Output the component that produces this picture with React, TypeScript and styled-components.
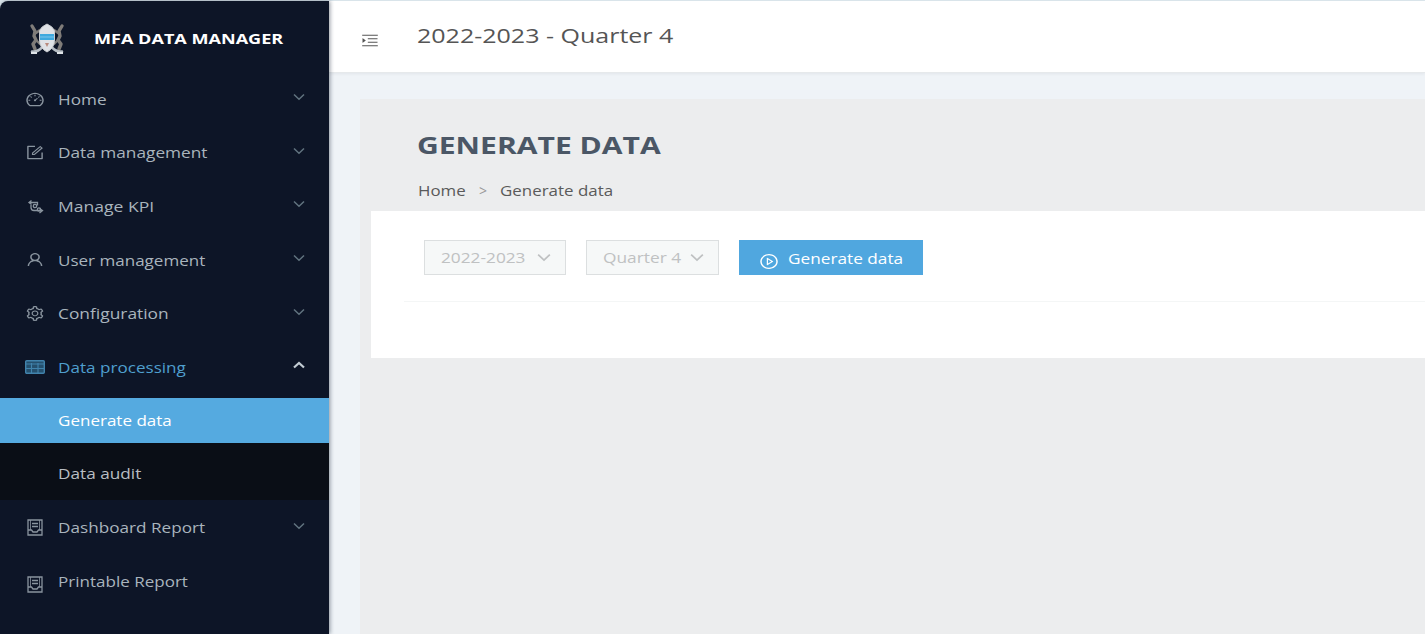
import React from "react";
import styled, { createGlobalStyle } from "styled-components";
import {
  AiOutlineDashboard,
  AiOutlineForm,
  AiOutlineUser,
  AiOutlineSetting,
  AiOutlineMenuUnfold,
  AiOutlinePlayCircle,
} from "react-icons/ai";

const GlobalStyle = createGlobalStyle`
  * { box-sizing: border-box; }
  body {
    margin: 0;
    overflow: hidden;
    font-family: "Open Sans", "Noto Sans", sans-serif;
  }
`;

const Page = styled.div`
  display: flex;
  height: 634px;
  padding-top: 1px;
  background: #dbe6ec;
`;

const Sidebar = styled.aside`
  flex: none;
  width: 329px;
  border-radius: 8px 0 0 0;
  background: #0d1527;
  box-shadow: 1px 0 4px rgba(10, 25, 45, 0.45);
  z-index: 1;
`;

const Brand = styled.div`
  display: flex;
  align-items: center;
  height: 71px;
  padding: 4px 0 0 28px;
`;

const BrandName = styled.div`
  margin-left: 28px;
  height: 20px;
  color: #fff;
  font: 700 14.5px/20px "Open Sans", sans-serif;
  white-space: nowrap;
`;

/* Text drawn on a wide face: glyphs keep their height and grow sideways. */
const Wide = styled.span<{ $x: number }>`
  display: inline-block;
  white-space: nowrap;
  transform: scaleX(${(p) => p.$x});
  transform-origin: 0 50%;
`;

const Menu = styled.nav`
  display: flex;
  flex-direction: column;
`;

const Item = styled.div<{ $active?: boolean }>`
  display: flex;
  flex: none;
  align-items: center;
  height: 53.6px;
  padding: 0 24px 0 25px;
  color: ${(p) => (p.$active ? "#4f9fce" : "#a9b4bd")};
  font-size: 15px;
`;

const ItemIcon = styled.span<{ $drop?: number }>`
  display: flex;
  width: 33px;
  flex: none;
  opacity: 0.8;
  padding-top: ${(p) => p.$drop ?? 0}px;
`;

const ItemLabel = styled.span`
  flex: 1;
`;

const Arrow = styled.span<{ $open?: boolean }>`
  display: flex;
  margin-top: -3px;
  color: ${(p) => (p.$open ? "#c3cdd4" : "#61737f")};
`;

const SubMenu = styled.div`
  flex: none;
  height: 102.4px;
  margin-top: 4.4px;
  background: #0a0e16;
`;

const SubItem = styled.div<{ $selected?: boolean }>`
  display: flex;
  align-items: center;
  height: ${(p) => (p.$selected ? 45 : 61)}px;
  padding-left: 58px;
  background: ${(p) => (p.$selected ? "#55aae0" : "transparent")};
  color: ${(p) => (p.$selected ? "#fff" : "#b9bec3")};
  font-size: 15px;
`;

const Main = styled.main`
  flex: 1;
  min-width: 0;
  display: flex;
  flex-direction: column;
  background: #eff3f7;
`;

const TopBar = styled.header`
  flex: none;
  display: flex;
  align-items: center;
  height: 72px;
  padding-left: 31px;
  background: #fff;
  border-bottom: 1px solid #e6e9eb;
  box-shadow: 0 1px 3px rgba(0, 21, 41, 0.06);
`;

const Toggle = styled.span`
  display: flex;
  width: 57px;
  padding-top: 8px;
  color: #555;
`;

const Period = styled.div`
  height: 30px;
  margin-bottom: 3px;
  line-height: 30px;
  font-size: 20.5px;
  color: #555;
`;

const Panel = styled.section`
  flex: 1;
  margin: 26px 0 0 31px;
  padding-left: 11px;
  background: #ecedee;
`;

const Heading = styled.div`
  height: 112px;
  padding: 31px 0 0 46px;
`;

const Title = styled.h1`
  margin: 0;
  height: 30px;
  color: #4b5766;
  font-size: 24px;
  line-height: 30px;
  font-weight: 700;
`;

const Crumbs = styled.div`
  display: flex;
  height: 20px;
  margin: 21px 0 0 1px;
  color: #5a5a5a;
  font-size: 14px;
  line-height: 20px;
`;

const Crumb = styled.span<{ $w: number; $faint?: boolean }>`
  width: ${(p) => p.$w}px;
  color: ${(p) => (p.$faint ? "#999" : "inherit")};
`;

const Card = styled.div`
  height: 147px;
  padding: 29px 0 0 33px;
  background: #fff;
`;

const Controls = styled.div`
  display: flex;
  height: 62px;
  padding-left: 20px;
  border-bottom: 1px solid #f4f6f6;
`;

const Select = styled.div<{ $w: number }>`
  display: flex;
  align-items: center;
  justify-content: space-between;
  width: ${(p) => p.$w}px;
  height: 35px;
  margin-right: 20px;
  padding: 0 14px 0 15.5px;
  border: 1px solid #dcdfe0;
  background: #f6f8f8;
  color: #bfc1c2;
  font-size: 14.5px;
`;

const GenerateButton = styled.button`
  display: flex;
  align-items: center;
  width: 184px;
  height: 35px;
  padding: 1px 0 0 20px;
  border: 0;
  background: #50a7df;
  color: #fff;
  font: 14.5px "Open Sans", sans-serif;
`;

const ButtonIcon = styled.span`
  display: flex;
  width: 29px;
  padding-top: 6px;
`;

const Glyph = styled.svg`
  display: block;
  flex: none;
  fill: none;
  stroke: currentColor;
`;

const Chevron = ({ w = 12, h = 8, up = false }: { w?: number; h?: number; up?: boolean }) => (
  <Glyph
    width={w}
    height={h}
    viewBox="0 0 12 8"
    strokeWidth={up ? 2.2 : 1.5}
    preserveAspectRatio="none"
  >
    <path d={up ? "M1 6.500 6 2l5 4.500" : "M1 1.500 6 6.300l5-4.800"} />
  </Glyph>
);

const CoatOfArms = () => (
  <Glyph width="38" height="32" viewBox="0 0 38 32">
    <g stroke="#7f7c79" strokeWidth="3.4" strokeLinecap="round" strokeLinejoin="round">
      <path d="M4 3 7 8 6 13 8 17 5 21 7 26" />
      <path d="M34 3 31 8 32 13 30 17 33 21 31 26" />
      <path d="M8 10 12 7M30 10 26 7M8 17 12 21M30 17 26 21" strokeWidth="2.4" />
    </g>
    <path d="M4 28.500q5 1 10-4h10q5 5 10 4" stroke="#b5bcc3" strokeWidth="2.600" strokeLinecap="round" />
    <path d="M3 30h6M29 30h6" stroke="#dfe4e8" strokeWidth="2" />
    <path d="M11.500 8q1-4 7.500-7 6.500 3 7.500 7v9q0 8-7.500 12-7.500-4-7.500-12z" fill="#dfe2e6" stroke="#c8ccd0" />
    <path d="M12 11h14v6H12z" fill="#3fa9de" stroke="none" />
    <path d="M12 14h14" stroke="#7cc6ec" />
    <path d="M17 20h4l-2 4z" fill="#b98a7d" stroke="none" />
  </Glyph>
);

const KpiIcon = () => (
  <Glyph width="20" height="16" viewBox="-2 0 20 16" strokeWidth="1.3">
    <path d="M2 3.5h8.5v3M4.500 1.500 2 3.500l2.500 2M4 6v2.500q0 3 3 3h8M12.500 9.500l3 2-3 2.500" />
    <circle cx="8" cy="7" r="1.700" />
    <circle cx="12" cy="10.500" r="1.700" />
  </Glyph>
);

const TableIcon = () => (
  <Glyph width="20" height="14" viewBox="0 0 20 14">
    <rect x="0.700" y="0.700" width="18.600" height="12.600" rx="1" fill="#2b5f80" strokeWidth="1.400" />
    <path d="M1 4h18M1 8.500h18M6.500 3v10M13 3v10" strokeWidth="1.100" />
  </Glyph>
);

const ReportIcon = () => (
  <Glyph width="18" height="17" viewBox="-2 0 18 17" strokeWidth="1.300">
    <path d="M1 1h14v15H1zM1 11h3.500l1.500 2h4l1.500-2H15M5 4.500h6M5 7.500h6" />
    <path d="M3.500 1v10M12.500 1v10" strokeWidth="0.800" />
  </Glyph>
);

type Entry = {
  label: string;
  x: number;
  icon: React.ReactNode;
  drop?: number;
  arrow?: boolean;
  open?: boolean;
};

const wideIcon = (Icon: React.ComponentType<any>) => (
  <Icon preserveAspectRatio="none" style={{ width: 20, height: 17 }} />
);

const before: Entry[] = [
  { label: "Home", x: 1.145, icon: wideIcon(AiOutlineDashboard), arrow: true, drop: 2 },
  { label: "Data management", x: 1.15, icon: wideIcon(AiOutlineForm), arrow: true },
  { label: "Manage KPI", x: 1.17, icon: <KpiIcon />, arrow: true, drop: 2 },
  { label: "User management", x: 1.135, icon: wideIcon(AiOutlineUser), arrow: true },
  { label: "Configuration", x: 1.157, icon: wideIcon(AiOutlineSetting), arrow: true },
  { label: "Data processing", x: 1.14, icon: <TableIcon />, arrow: true, open: true },
];

const after: Entry[] = [
  { label: "Dashboard Report", x: 1.143, icon: <ReportIcon />, arrow: true, drop: 1 },
  { label: "Printable Report", x: 1.135, icon: <ReportIcon />, drop: 7 },
];

const MenuItem = ({ e }: { e: Entry }) => (
  <Item $active={e.open}>
    <ItemIcon $drop={e.drop}>{e.icon}</ItemIcon>
    <ItemLabel>
      <Wide $x={e.x}>{e.label}</Wide>
    </ItemLabel>
    {e.arrow && (
      <Arrow $open={e.open}>
        <Chevron up={e.open} h={8} />
      </Arrow>
    )}
  </Item>
);

export default function App() {
  return (
    <>
      <GlobalStyle />
      <Page>
        <Sidebar>
          <Brand>
            <CoatOfArms />
            <BrandName>
              <Wide $x={1.245}>MFA DATA MANAGER</Wide>
            </BrandName>
          </Brand>
          <Menu>
            {before.map((e) => (
              <MenuItem key={e.label} e={e} />
            ))}
            <SubMenu>
              <SubItem $selected>
                <Wide $x={1.135}>Generate data</Wide>
              </SubItem>
              <SubItem>
                <Wide $x={1.147}>Data audit</Wide>
              </SubItem>
            </SubMenu>
            {after.map((e) => (
              <MenuItem key={e.label} e={e} />
            ))}
          </Menu>
        </Sidebar>
        <Main>
          <TopBar>
            <Toggle>
              <AiOutlineMenuUnfold preserveAspectRatio="none" style={{ width: 20, height: 17 }} />
            </Toggle>
            <Period>
              <Wide $x={1.22}>2022-2023 - Quarter 4</Wide>
            </Period>
          </TopBar>
          <Panel>
            <Heading>
              <Title>
                <Wide $x={1.253}>GENERATE DATA</Wide>
              </Title>
              <Crumbs>
                <Crumb $w={61}>
                  <Wide $x={1.205}>Home</Wide>
                </Crumb>
                <Crumb $w={21} $faint>
                  &gt;
                </Crumb>
                <Crumb $w={120}>
                  <Wide $x={1.208}>Generate data</Wide>
                </Crumb>
              </Crumbs>
            </Heading>
            <Card>
              <Controls>
                <Select $w={142}>
                  <Wide $x={1.19}>2022-2023</Wide>
                  <Chevron w={14} h={9} />
                </Select>
                <Select $w={133}>
                  <Wide $x={1.195}>Quarter 4</Wide>
                  <Chevron w={14} h={9} />
                </Select>
                <GenerateButton>
                  <ButtonIcon>
                    <AiOutlinePlayCircle preserveAspectRatio="none" style={{ width: 20, height: 17 }} />
                  </ButtonIcon>
                  <Wide $x={1.188}>Generate data</Wide>
                </GenerateButton>
              </Controls>
            </Card>
          </Panel>
        </Main>
      </Page>
    </>
  );
}
